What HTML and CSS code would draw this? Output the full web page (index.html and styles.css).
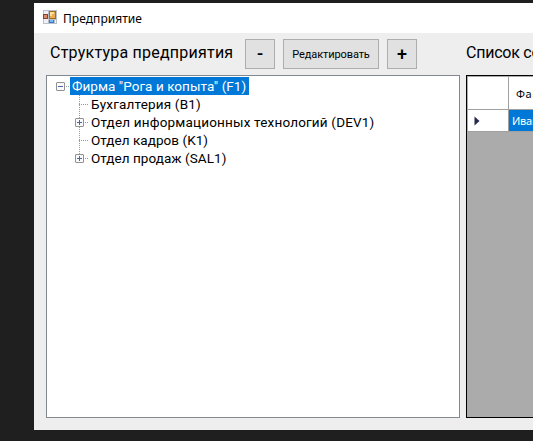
FILE: index.html
```html
<!DOCTYPE html>
<html lang="ru">
<head>
<meta charset="utf-8">
<title>Предприятие</title>
<link rel="stylesheet" href="styles.css">
</head>
<body>
<main class="window">
  <header class="titlebar">
    <svg class="app-icon" width="14" height="14" viewBox="0 0 14 14" shape-rendering="crispEdges">
      <path fill="#b9bfcb" d="M0 0h14v14H0z"/>
      <path fill="#eef1f6" d="M1 1h4v3H1zM1 9h4v4H1zM12 10h1v3h-1z"/>
      <path fill="#8f4030" d="M0 4h5v5H0z"/>
      <path fill="#d98a68" d="M1 5h3v3H1z"/>
      <path fill="#a76b16" d="M6 1h7v8H6z"/>
      <path fill="#e9ad55" d="M7 2h5v6H7z"/>
      <path fill="#ffe0a0" d="M7 2h4v2H9v2H7z"/>
      <path fill="#3978cf" d="M6 10h5v3H6z"/>
      <path fill="#75b7f5" d="M7 10h3v2H7z"/>
    </svg>
    <span class="caption">Предприятие</span>
  </header>
  <div class="content">
    <section class="structure">
      <div class="toolbar">
        <h1 class="heading">Структура предприятия</h1>
        <button class="button sign">-</button>
        <button class="button edit">Редактировать</button>
        <button class="button sign">+</button>
      </div>
      <div class="tree">
        <div class="node root"><span class="box"></span><span class="dots short"></span><span class="label selected">Фирма "Рога и копыта" (F1)</span></div>
        <div class="children">
          <div class="node"><span class="dots leaf"></span><span class="label wide">Бухгалтерия (B1)</span></div>
          <div class="node"><span class="box plus"></span><span class="dots short"></span><span class="label wide">Отдел информационных технологий (DEV1)</span></div>
          <div class="node"><span class="dots leaf"></span><span class="label">Отдел кадров (K1)</span></div>
          <div class="node"><span class="box plus"></span><span class="dots short"></span><span class="label">Отдел продаж (SAL1)</span></div>
        </div>
      </div>
    </section>
    <section class="employees">
      <h1 class="heading list-heading">Список сотрудников</h1>
      <div class="grid">
        <div class="cell corner"></div><div class="cell column-name">Фамилия</div>
        <div class="cell row-mark"><svg width="6" height="10" viewBox="0 0 6 10"><path fill="#27274f" d="M0.5 0.5L5.5 5L0.5 9.5z"/></svg></div><div class="cell value">Иванов</div>
      </div>
    </section>
  </div>
</main>
</body>
</html>
```
FILE: styles.css
```css
* { box-sizing: border-box; }
body {
  margin: 0;
  height: 441px;
  overflow: hidden;
  padding: 3px 0 11px 34px;
  background: #1f1f1f;
  color: #000;
  font-family: Roboto, "Liberation Sans", sans-serif;
}
.window {
  height: 427px;
  display: flex;
  flex-direction: column;
  overflow: hidden;
  background: #eee;
}
.titlebar {
  height: 30px;
  flex: none;
  display: flex;
  align-items: center;
  gap: 6px;
  padding-left: 9px;
  background: #fff;
}
.app-icon { margin-top: -2px; }
.caption { font: 12px/16px "Noto Sans", sans-serif; padding-top: 1px; letter-spacing: 0.05px; }
.content {
  flex: 1;
  display: flex;
  gap: 6px;
  padding: 6px 0 12px 12px;
}
.structure { width: 414px; flex: none; display: flex; flex-direction: column; }
.toolbar { display: flex; gap: 8px; height: 30px; margin-bottom: 6px; }
.heading {
  margin: 0;
  width: 191px;
  padding-left: 4px;
  font-size: 16px;
  font-weight: 400;
  line-height: 27px;
  letter-spacing: 0.23px;
  white-space: nowrap;
}
.button {
  height: 30px;
  padding: 0;
  border: 1px solid #adadad;
  background: #e1e1e1;
  color: #000;
  font: 11px/28px Roboto, sans-serif;
}
.sign { width: 30px; font-size: 18px; font-weight: 500; line-height: 26px; }
.edit { width: 96px; letter-spacing: -0.1px; padding-top: 1px; }
.tree {
  flex: 1;
  padding: 1px 0 0 9px;
  border: 1px solid #828790;
  background: #fff;
  font-size: 13.5px;
  letter-spacing: 0.05px;
}
.node { height: 18px; display: flex; align-items: center; }
.children {
  margin-left: 23px;
  background: repeating-linear-gradient(to bottom, #999 0 1px, transparent 1px 2px) 0 0 / 1px 64px no-repeat;
}
.box {
  width: 9px;
  height: 9px;
  flex: none;
  border: 1px solid #919191;
  border-radius: 1px;
  background: linear-gradient(#4b63a7, #4b63a7) center / 5px 1px no-repeat, #fafafa;
}
.plus {
  margin-left: -4px;
  background: linear-gradient(#4b63a7, #4b63a7) center / 5px 1px no-repeat, linear-gradient(#4b63a7, #4b63a7) center / 1px 5px no-repeat, #fafafa;
}
.dots { height: 1px; flex: none; background: repeating-linear-gradient(to right, #999 0 1px, transparent 1px 2px); }
.short { width: 3px; margin: 0 1px; }
.leaf { width: 9px; margin-right: 1px; }
.label { height: 18px; padding-left: 2px; line-height: 19px; white-space: nowrap; }
.wide { letter-spacing: 0.18px; }
.selected { width: 179px; background: #0078d7; color: #fff; }
.employees { flex: 1; min-width: 0; display: flex; flex-direction: column; overflow: hidden; }
.list-heading { height: 30px; margin-bottom: 6px; padding-left: 0; letter-spacing: -0.25px; }
.grid {
  flex: 1;
  display: grid;
  grid-template: 33px 22px / 41px 100px;
  align-content: start;
  padding: 1px 0 0 1px;
  border: 1px solid #000;
  border-right: 0;
  background: #ababab;
}
.cell {
  border-right: 1px solid #a0a0a0;
  border-bottom: 1px solid #a0a0a0;
  background: #fff;
  font: 11px/21px "Noto Sans", sans-serif;
}
.column-name { padding-left: 7px; line-height: 33px; letter-spacing: 0.6px; }
.row-mark { padding: 6px 0 0 6px; line-height: 0; }
.value { padding-left: 3px; background: #0078d7; color: #fff; letter-spacing: -0.2px; }
```
